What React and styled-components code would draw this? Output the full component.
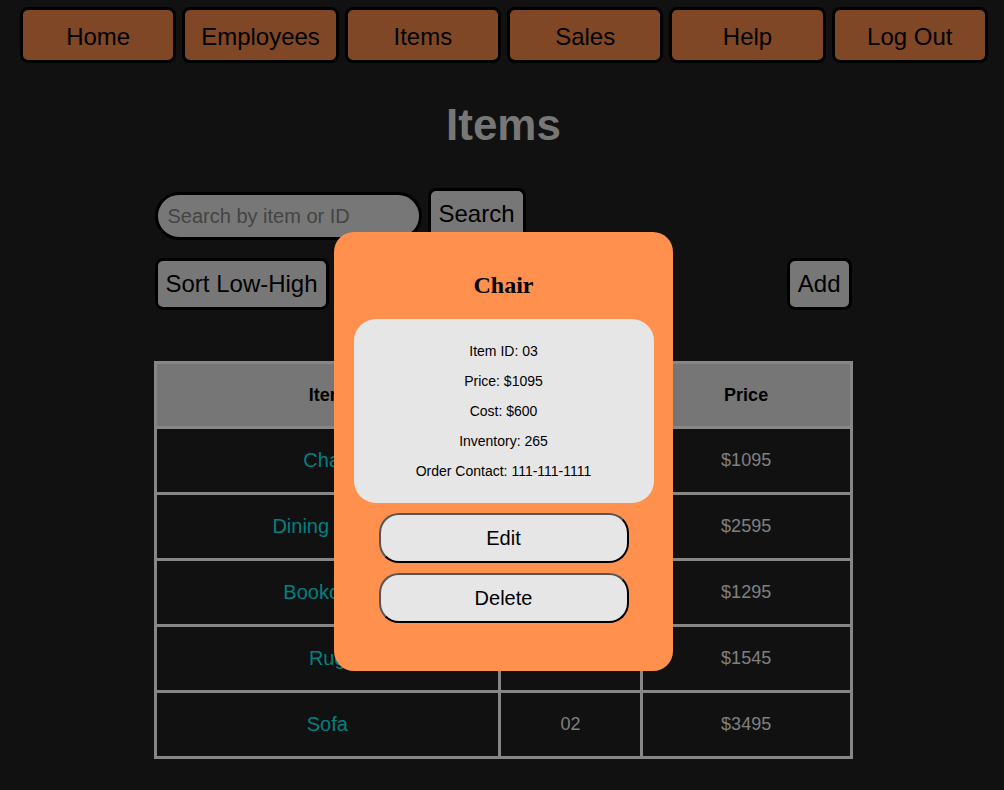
import React from "react";
import styled, { createGlobalStyle } from "styled-components";

const GlobalStyle = createGlobalStyle`
  html, body {
    margin: 0;
    padding: 0;
    background: #111111;
    font-family: "Liberation Sans", Arial, sans-serif;
  }
`;

const Page = styled.div`
  position: relative;
  min-height: 790px;
  background: #111111;
`;

const Nav = styled.nav`
  display: flex;
  gap: 6px;
  padding: 7px 16px 0 20px;
`;

const NavButton = styled.button`
  flex: 1;
  height: 56px;
  background: #7f4726;
  border: 3px solid #000;
  border-radius: 8px;
  color: #000;
  font-family: "Liberation Sans", Arial, sans-serif;
  font-size: 24px;
  padding: 4px 0 0;
  cursor: pointer;
`;

const Title = styled.h1`
  margin: 37px 0 0;
  text-align: center;
  color: #777777;
  font-size: 44px;
  line-height: 50px;
  font-weight: bold;
  padding-left: 3px;
`;

const Content = styled.div`
  width: 697px;
  margin: 0 auto;
  position: relative;
  left: 1px;
`;

const SearchRow = styled.div`
  display: flex;
  align-items: flex-start;
  gap: 6px;
  margin-top: 38px;
`;

const SearchInput = styled.input`
  box-sizing: border-box;
  width: 267px;
  height: 48px;
  margin-top: 4px;
  background: #777777;
  border: 3px solid #000;
  border-radius: 24px;
  padding: 0 10px;
  font-family: "Liberation Sans", Arial, sans-serif;
  font-size: 20px;
  color: #222;
  outline: none;

  &::placeholder {
    color: #444;
  }
`;

const GrayButton = styled.button`
  box-sizing: border-box;
  height: 52px;
  padding: 0 8px;
  background: #777777;
  border: 3px solid #000;
  border-radius: 8px;
  color: #000;
  font-family: "Liberation Sans", Arial, sans-serif;
  font-size: 24px;
  cursor: pointer;
`;

const ActionRow = styled.div`
  display: flex;
  justify-content: space-between;
  margin-top: 18px;
`;

const Table = styled.table`
  width: 699px;
  margin: 51px 0 0 -1px;
  border-collapse: collapse;
  border: 3px solid #878787;
`;

const HeadCell = styled.th`
  background: #767676;
  color: #000;
  font-size: 18px;
  font-weight: bold;
  height: 62px;
  padding: 0;
  border: 3px solid #878787;
  width: ${(p) => p.$w}px;
`;

const Cell = styled.td`
  height: 63px;
  padding: 0;
  text-align: center;
  border: 3px solid #878787;
  color: ${(p) => (p.$name ? "#008080" : "#808080")};
  font-size: ${(p) => (p.$name ? 20 : 18)}px;
`;

const Modal = styled.div`
  position: absolute;
  top: 232px;
  left: 334px;
  width: 339px;
  box-sizing: border-box;
  padding: 0 20px 48px;
  background: #ff904d;
  border-radius: 20px;
  display: flex;
  flex-direction: column;
  align-items: center;
`;

const ModalTitle = styled.h2`
  margin: 40px 0 0;
  font-family: "Liberation Serif", "Times New Roman", serif;
  font-size: 24px;
  line-height: 27px;
  font-weight: bold;
  color: #000;
`;

const InfoBox = styled.div`
  box-sizing: border-box;
  width: 300px;
  margin-top: 20px;
  padding: 10px 0;
  background: #e6e6e6;
  border-radius: 22px;
  text-align: center;
`;

const InfoLine = styled.p`
  margin: 14px 0;
  font-size: 14px;
  line-height: 16px;
  color: #000;
`;

const ModalButton = styled.button`
  box-sizing: border-box;
  width: 250px;
  height: 50px;
  margin-top: ${(p) => p.$gap}px;
  background: #e6e6e6;
  border: 2px solid;
  border-color: #555 #000 #000 #555;
  border-radius: 20px;
  color: #000;
  font-family: "Liberation Sans", Arial, sans-serif;
  font-size: 20px;
  cursor: pointer;
`;

const navItems = ["Home", "Employees", "Items", "Sales", "Help", "Log Out"];

const items = [
  { name: "Chair", id: "03", price: "$1095" },
  { name: "Dining Table", id: "01", price: "$2595" },
  { name: "Bookcase", id: "04", price: "$1295" },
  { name: "Rug", id: "05", price: "$1545" },
  { name: "Sofa", id: "02", price: "$3495" },
];

export default function App() {
  return (
    <>
      <GlobalStyle />
      <Page>
        <Nav>
          {navItems.map((n) => (
            <NavButton key={n}>{n}</NavButton>
          ))}
        </Nav>
        <Title>Items</Title>
        <Content>
          <SearchRow>
            <SearchInput placeholder="Search by item or ID" />
            <GrayButton>Search</GrayButton>
          </SearchRow>
          <ActionRow>
            <GrayButton>Sort Low-High</GrayButton>
            <GrayButton>Add</GrayButton>
          </ActionRow>
          <Table>
            <thead>
              <tr>
                <HeadCell $w={342}>Item</HeadCell>
                <HeadCell $w={139}>ID</HeadCell>
                <HeadCell $w={207}>Price</HeadCell>
              </tr>
            </thead>
            <tbody>
              {items.map((it) => (
                <tr key={it.name}>
                  <Cell $name>{it.name}</Cell>
                  <Cell>{it.id}</Cell>
                  <Cell>{it.price}</Cell>
                </tr>
              ))}
            </tbody>
          </Table>
        </Content>
        <Modal>
          <ModalTitle>Chair</ModalTitle>
          <InfoBox>
            <InfoLine>Item ID: 03</InfoLine>
            <InfoLine>Price: $1095</InfoLine>
            <InfoLine>Cost: $600</InfoLine>
            <InfoLine>Inventory: 265</InfoLine>
            <InfoLine>Order Contact: 111-111-1111</InfoLine>
          </InfoBox>
          <ModalButton $gap={10}>Edit</ModalButton>
          <ModalButton $gap={10}>Delete</ModalButton>
        </Modal>
      </Page>
    </>
  );
}
